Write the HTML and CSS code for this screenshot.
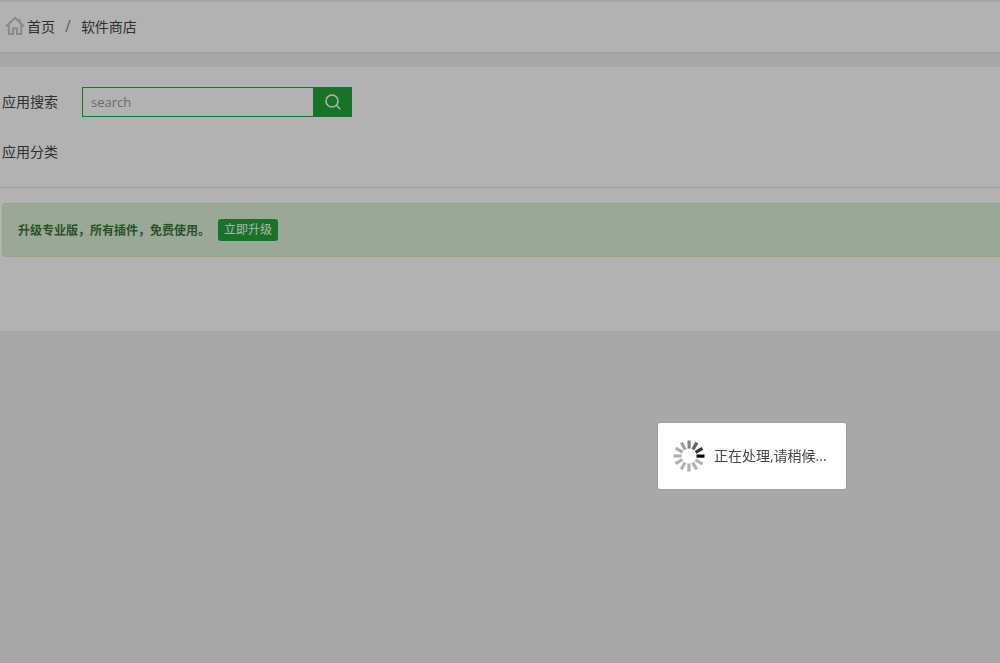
FILE: index.html
```html
<!DOCTYPE html>
<html lang="zh-CN">
<head>
  <meta charset="UTF-8">
  <title>软件商店</title>
  <link rel="stylesheet" href="styles.css">
</head>
<body>
  <div class="crumbs">
    <svg class="home-icon" width="20" height="20" viewBox="0 0 20 20" fill="none" stroke="#c4c4c4" stroke-width="2">
      <path d="M1 10.5 10 1.8l9 8.7"/>
      <path d="M3.8 9v9h4.2v-5.5h4V18h4.2V9"/>
      <path d="M14.5 3v3"/>
    </svg>
    <a class="crumb-link">首页</a>
    <span class="crumb-sep">/</span>
    <a class="crumb-link">软件商店</a>
  </div>

  <div class="card">
    <div class="search-row">
      <span class="row-label">应用搜索</span>
      <div class="search-box">
        <input class="search-input" type="text" placeholder="search">
        <button class="search-btn">
          <svg width="18" height="18" viewBox="0 0 18 18" fill="none" stroke="#fff" stroke-width="1.6">
            <circle cx="8" cy="8" r="6"/>
            <path d="M12.3 12.3 16.3 16.3"/>
          </svg>
        </button>
      </div>
    </div>
    <div class="type-row">
      <span class="row-label">应用分类</span>
    </div>
    <div class="divider"></div>
    <div class="alert">
      <span class="alert-text">升级专业版，所有插件，免费使用。</span>
      <a class="upgrade-btn">立即升级</a>
    </div>
  </div>

  <div class="shade"></div>

  <div class="loading">
    <svg class="spinner" width="32" height="32" viewBox="0 0 32 32" fill="#000">
      <rect x="23.5" y="14.5" width="8" height="3.2" opacity="1"/>
      <rect x="23.5" y="14.5" width="8" height="3.2" opacity="0.8" transform="rotate(-30 16 16)"/>
      <rect x="23.5" y="14.5" width="8" height="3.2" opacity="0.62" transform="rotate(-60 16 16)"/>
      <rect x="23.5" y="14.5" width="8" height="3.2" opacity="0.48" transform="rotate(-90 16 16)"/>
      <rect x="23.5" y="14.5" width="8" height="3.2" opacity="0.38" transform="rotate(-120 16 16)"/>
      <rect x="23.5" y="14.5" width="8" height="3.2" opacity="0.32" transform="rotate(-150 16 16)"/>
      <rect x="23.5" y="14.5" width="8" height="3.2" opacity="0.3" transform="rotate(-180 16 16)"/>
      <rect x="23.5" y="14.5" width="8" height="3.2" opacity="0.3" transform="rotate(-210 16 16)"/>
      <rect x="23.5" y="14.5" width="8" height="3.2" opacity="0.3" transform="rotate(-240 16 16)"/>
      <rect x="23.5" y="14.5" width="8" height="3.2" opacity="0.3" transform="rotate(-270 16 16)"/>
      <rect x="23.5" y="14.5" width="8" height="3.2" opacity="0.3" transform="rotate(-300 16 16)"/>
      <rect x="23.5" y="14.5" width="8" height="3.2" opacity="0.3" transform="rotate(-330 16 16)"/>
    </svg>
    <span class="loading-text">正在处理,请稍候...</span>
  </div>
</body>
</html>
```

FILE: styles.css
```css
* {
  box-sizing: border-box;
}

html, body {
  height: 100%;
}

body {
  margin: 0;
  overflow: hidden;
  background-color: #f1f1f1;
  color: #444;
  font-family: "Open Sans", "Noto Sans CJK SC", sans-serif;
  font-size: 14px;
}

.crumbs {
  display: flex;
  align-items: center;
  height: 53px;
  padding: 0 0 2px 5px;
  background-color: #fff;
  border-top: 2px solid #eee;
  border-bottom: 1px solid #e2e2e2;
  box-shadow: 0 1px 2px rgba(0, 0, 0, 0.05);
}

.home-icon {
  margin-right: 2px;
}

.crumb-link {
  color: #444;
}

.crumb-sep {
  margin: 0 10px;
  color: #888;
  font-size: 16px;
}

.card {
  height: 264px;
  margin-top: 14px;
  background-color: #fff;
}

.search-row {
  display: flex;
  align-items: center;
  padding: 20px 0 0 2px;
}

.row-label {
  width: 80px;
  padding-bottom: 2px;
  color: #444;
}

.search-box {
  display: flex;
  width: 270px;
  height: 30px;
}

.search-input {
  width: 231px;
  height: 30px;
  padding: 0 8px;
  border: 1px solid #20a53a;
  border-right: 0;
  background: #fff;
  font-family: inherit;
  font-size: 13px;
  outline: none;
}

.search-input::placeholder {
  color: #999;
}

.search-btn {
  display: flex;
  align-items: center;
  justify-content: center;
  width: 39px;
  height: 30px;
  padding: 0;
  border: 0;
  background-color: #20a53a;
}

.type-row {
  padding: 25px 0 0 2px;
  line-height: 20px;
}

.divider {
  margin-top: 25px;
  border-top: 1px solid #ddd;
}

.alert {
  display: flex;
  align-items: center;
  height: 54px;
  margin: 15px 0 0 2px;
  padding-left: 15px;
  background-color: #dff0d8;
  border: 1px solid #d6e9c6;
  border-right: 0;
  border-radius: 4px 0 0 4px;
}

.alert-text {
  color: #3c763d;
  font-size: 12px;
  font-weight: 700;
}

.upgrade-btn {
  height: 22px;
  margin-left: 8px;
  padding: 0 6px;
  border-radius: 3px;
  background-color: #20a53a;
  color: #fff;
  font-size: 12px;
  line-height: 22px;
}

.shade {
  position: fixed;
  top: 0;
  right: 0;
  bottom: 0;
  left: 0;
  background-color: rgba(0, 0, 0, 0.3);
}

.loading {
  position: fixed;
  top: 423px;
  left: 658px;
  display: flex;
  align-items: center;
  width: 188px;
  height: 66px;
  padding: 0 0 0 15px;
  background-color: #fff;
  border-radius: 2px;
  box-shadow: 0 0 2px rgba(0, 0, 0, 0.2);
}

.spinner {
  flex: none;
  margin-right: 9px;
}

.loading-text {
  padding-bottom: 2px;
  color: #444;
  font-size: 14px;
}
```
